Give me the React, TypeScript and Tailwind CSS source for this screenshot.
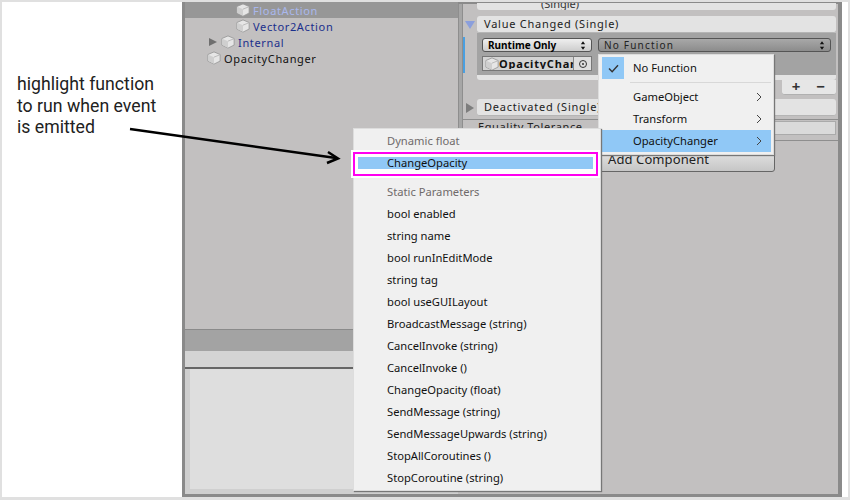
import React from "react";

const UI = "font-['Noto_Sans','DejaVu_Sans',sans-serif]";

function Cube({ className = "" }: { className?: string }) {
  return (
    <svg viewBox="0 0 16 16" className={`w-[14px] h-[14px] shrink-0 ${className}`}>
      <path d="M8 1 L15 4 V11.5 L8 15 L1 11.5 V4 Z" fill="#e6e6e6" stroke="#9a9a9a" strokeWidth="1" />
      <path d="M1.5 4.3 L8 7 V14.5 L1.5 11.3 Z" fill="#cfcfcf" />
      <path d="M8 7 L15 4.2" stroke="#b5b5b5" strokeWidth="1" fill="none" />
    </svg>
  );
}

function TreeRow({ label, color, pad, arrow, selected }: { label: string; color: string; pad: string; arrow?: boolean; selected?: boolean }) {
  return (
    <div className={`h-4 flex items-center ${pad} ${selected ? "bg-[#979797]" : ""}`}>
      {arrow && <span className="w-0 h-0 mr-[4px] border-y-[4px] border-y-transparent border-l-[8px] border-l-[#6f6f6f]" />}
      <Cube />
      <span className={`ml-[3px] text-[11px] tracking-[0.65px] leading-none ${color}`}>{label}</span>
    </div>
  );
}

function UpDown() {
  return (
    <svg viewBox="0 0 7 10" className="w-[6px] h-[9px]">
      <path d="M3.5 0 L6 3.5 H1 Z M3.5 10 L1 6.5 H6 Z" fill="#111" />
    </svg>
  );
}

function Header({ label, open }: { label: string; open?: boolean }) {
  return (
    <div className="flex items-center h-[17px]">
      <div className="w-[14px] flex justify-center">
        {open ? (
          <span className="w-0 h-0 border-x-[5px] border-x-transparent border-t-[8px] border-t-[#8b9fdc]" />
        ) : (
          <span className="w-0 h-0 border-y-[5px] border-y-transparent border-l-[8px] border-l-[#7d7d7d]" />
        )}
      </div>
      <div className="flex-1 h-full bg-[#e3e3e3] rounded-[3px] border-b border-[#b5b5b5] pl-[7px] text-[11px] tracking-[0.75px] text-[#1c1c1c] leading-[16px]">{label}</div>
    </div>
  );
}

function Chevron() {
  return (
    <svg viewBox="0 0 6 10" className="w-[6px] h-[10px]">
      <path d="M1 1 L5 5 L1 9" fill="none" stroke="#444" strokeWidth="1" />
    </svg>
  );
}

const dynamicItems = [
  "bool enabled",
  "string name",
  "bool runInEditMode",
  "string tag",
  "bool useGUILayout",
  "BroadcastMessage (string)",
  "CancelInvoke (string)",
  "CancelInvoke ()",
  "ChangeOpacity (float)",
  "SendMessage (string)",
  "SendMessageUpwards (string)",
  "StopAllCoroutines ()",
  "StopCoroutine (string)",
];

export default function App() {
  return (
    <div className={`relative w-[850px] h-[500px] bg-white border-x-2 border-t-2 border-b-[3px] border-[#e0e0e0] flex overflow-hidden ${UI}`}>
      <div className="w-[180px] shrink-0 pl-[15px] pt-[72px] font-['Roboto',sans-serif] text-[17.7px] leading-[21.5px] text-[#212121]">
        highlight function
        <br />
        to run when event
        <br />
        is emitted
      </div>

      <div className="w-[660px] h-[495px] bg-[#c2c0c0] border-l-[3px] border-r-[4px] border-t-2 border-b-[3px] border-[#8a8a8a] flex flex-col">
        <div className="flex flex-1 min-h-0">
          <div className="w-[273px] shrink-0 -mt-[2px] overflow-hidden">
            <TreeRow label="FloatAction" color="text-[#a9b7ee]" pad="pl-[51px]" selected />
            <TreeRow label="Vector2Action" color="text-[#1a2f8c]" pad="pl-[51px]" />
            <TreeRow label="Internal" color="text-[#1a2f8c]" pad="pl-[24px]" arrow />
            <TreeRow label="OpacityChanger" color="text-[#111]" pad="pl-[22px]" />
          </div>
          <div className="w-[5px] shrink-0 bg-[#a6a6a6] border-x border-[#8e8e8e]" />
          <div className="flex-1 relative pr-[2px]">
            <div className="absolute left-0 top-[33px] w-[2px] h-[36px] bg-[#4a9fe0]" />
            <div className="h-[7px] -mt-[1px] mb-[6px] ml-[14px] bg-[#e3e3e3] rounded-b-[3px] text-[11px] leading-[2px] pl-[64px] text-[#333] overflow-hidden">(Single)</div>
            <Header label="Value Changed (Single)" open />
            <div className="ml-[14px] h-[47px] bg-[#e3e3e3] rounded-b-[3px]">
              <div className="h-[42px] bg-[#a3a3a3] pl-[5px] pr-[5px] pt-[5px]">
                <div className="flex gap-[6px]">
                  <div className="w-[110px] h-[14px] bg-linear-to-b from-[#efefef] to-[#cdcdcd] border border-[#555] rounded-[3px] flex items-center justify-between px-[5px] text-[10px] font-bold text-black leading-none">
                    Runtime Only <UpDown />
                  </div>
                  <div className="flex-1 h-[14px] bg-linear-to-b from-[#a8a8a8] to-[#8c8c8c] border border-[#555] rounded-[3px] flex items-center justify-between px-[5px] text-[10px] tracking-[1.2px] text-[#222] leading-none">
                    No Function <UpDown />
                  </div>
                </div>
                <div className="mt-[4px] flex w-[110px] h-[15px] bg-[#d4d4d4] border border-[#777] text-[11px] font-bold leading-none items-center overflow-hidden">
                  <Cube className="ml-[2px]" />
                  <span className="w-[75px] overflow-hidden whitespace-nowrap tracking-[0.8px] text-[#111]">OpacityChanger</span>
                  <span className="ml-auto w-[18px] h-full bg-[#dedede] border-l border-[#888] flex items-center justify-center">
                    <span className="w-[8px] h-[8px] rounded-full border border-[#333] flex items-center justify-center">
                      <span className="w-[2px] h-[2px] bg-[#333] rounded-full" />
                    </span>
                  </span>
                </div>
              </div>
            </div>
            <div className="flex justify-end h-[15px]">
              <div className="w-[54px] bg-[#e6e6e6] border-b border-[#b0b0b0] rounded-b-[3px] flex items-center justify-end gap-[16px] pr-[11px] text-[15px] font-bold text-[#333] leading-none pb-[1px]">
                <span>+</span>
                <span>−</span>
              </div>
            </div>
            <div className="mt-[4px]">
              <Header label="Deactivated (Single)" />
            </div>
            <div className="mt-[3px] border-t border-[#8e8e8e] -mr-[2px]" />
            <div className="flex h-[14px] mt-[1px] ml-[15px] text-[11px] tracking-[0.6px] text-[#222]">
              <span className="w-[122px] leading-[12px]">Equality Tolerance</span>
              <div className="flex-1 h-[14px] bg-[#dadada] border border-[#aaa]" />
            </div>
            <div className="h-[1px] bg-[#8e8e8e] mt-[5px] -mr-[2px]" />
            <div className="mt-[9px] ml-[135px] w-[177px] h-[22px] bg-linear-to-b from-[#e4e4e4] to-[#c6c6c6] border border-[#666] rounded-[3px] pl-[9px] text-[13px] tracking-[0.1px] leading-[16px] text-[#222]">
              Add Component
            </div>
          </div>
        </div>
        <div className="w-[273px] h-[22px] bg-[#a3a3a3] border-t border-[#8a8a8a]" />
        <div className="w-[273px] h-[18px] bg-[#d4d4d4] border-b-2 border-[#666]" />
        <div className="w-[273px] h-[125px] bg-[#dedede] border-l-[5px] border-b-[5px] border-[#cfcfcf]" />
      </div>

      {/* Function picker menu */}
      <div className="absolute left-[596px] top-[52px] w-[176px] h-[101px] bg-[#f0f0f0] border border-[#ddd] shadow-[1px_1px_1px_#777] pl-[3px] pr-[2px] pt-[2px] text-[11.2px] text-[#111]">
        <div className="flex items-center h-[22px]">
          <div className="w-[22px] h-[22px] bg-[#90c8f6] flex items-center justify-center">
            <svg viewBox="0 0 12 10" className="w-[11px] h-[9px]">
              <path d="M1 5 L4.5 8.5 L11 1.5" fill="none" stroke="#333" strokeWidth="1.6" />
            </svg>
          </div>
          <span className="ml-[9px]">No Function</span>
        </div>
        <div className="h-[1px] bg-[#d8d8d8] ml-[28px] mt-[3px] mb-[3px]" />
        {["GameObject", "Transform", "OpacityChanger"].map((m, i) => (
          <div key={m} className={`flex items-center justify-between h-[22px] pl-[31px] pr-[9px] ${i === 2 ? "bg-[#90c8f6]" : ""}`}>
            {m}
            <Chevron />
          </div>
        ))}
      </div>

      {/* Dynamic method menu */}
      <div className="absolute left-[351px] top-[126px] w-[248px] h-[363px] bg-[#f0f0f0] border border-[#ddd] shadow-[1px_1px_1px_#777] text-[11.2px] text-[#111] pt-[1px]">
        <div className="h-[22px] pl-[33px] leading-[22px] text-[#6f6a6a]">Dynamic float</div>
        <div className="h-[24px] -ml-[1px] mr-[2px] border-2 border-[#ff00f0] bg-white shadow-[0_0_0_2px_white] p-[3px]">
          <div className="h-[12px] bg-[#90c8f6] pl-[29px] leading-[11px]">ChangeOpacity</div>
        </div>
        <div className="h-[22px] mt-[5px] pl-[33px] leading-[22px] text-[#6f6a6a]">Static Parameters</div>
        {dynamicItems.map((m) => (
          <div key={m} className="h-[22px] pl-[33px] leading-[22px]">
            {m}
          </div>
        ))}
      </div>

      {/* Annotation arrow */}
      <svg className="absolute left-0 top-0 pointer-events-none" width="846" height="495" viewBox="2 2 846 495">
        <path d="M130 129 L336 158" stroke="#000" strokeWidth="2.5" fill="none" />
        <path d="M328 152 L338 158.5 L327 163" stroke="#000" strokeWidth="2.5" fill="none" />
      </svg>
    </div>
  );
}
